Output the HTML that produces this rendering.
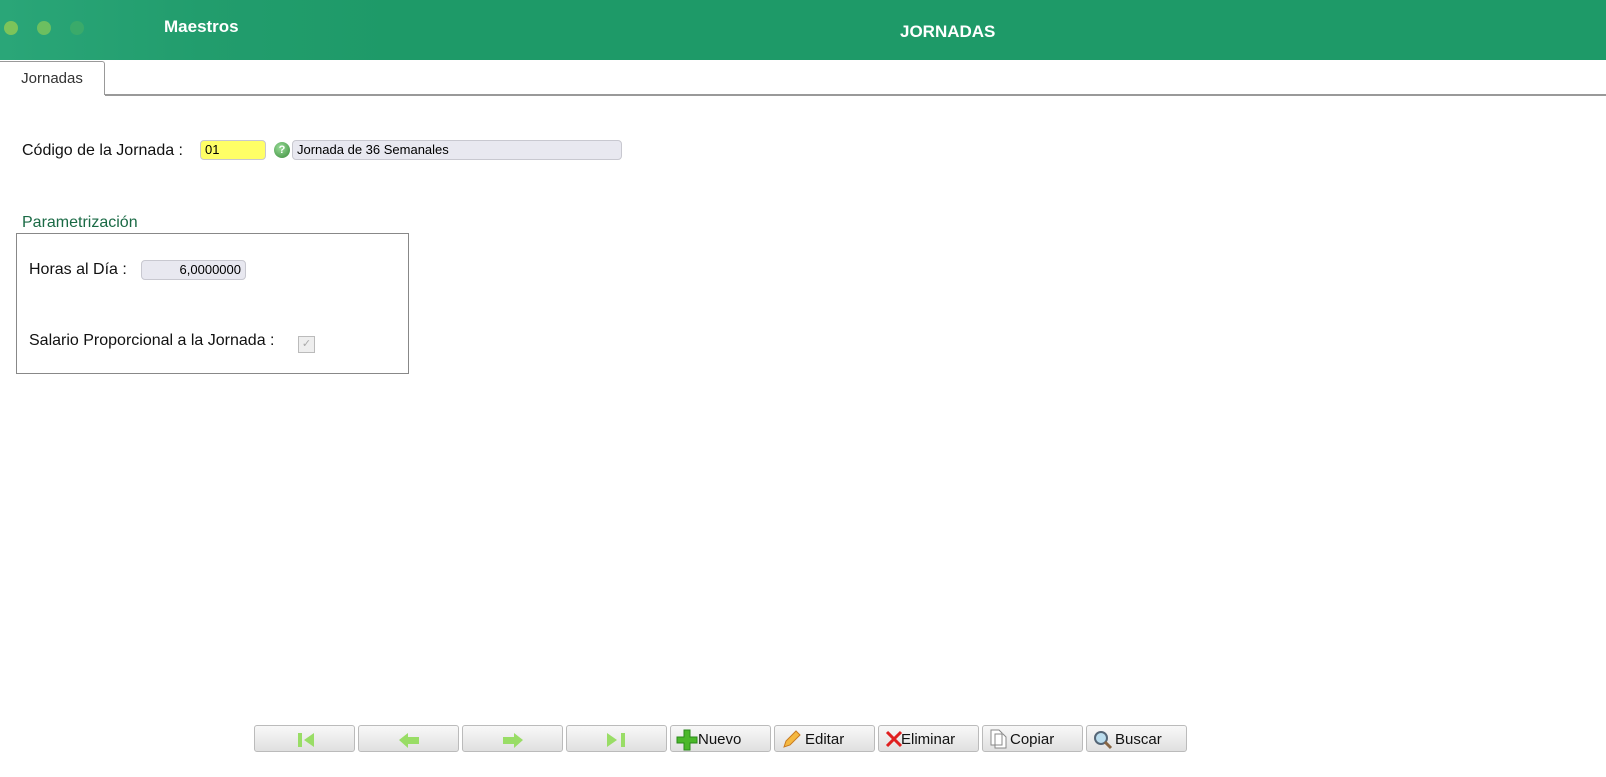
<!DOCTYPE html>
<html><head><meta charset="utf-8"><style>
body{margin:0;width:1606px;height:777px;background:#fff;font-family:"Liberation Sans",sans-serif;position:relative;overflow:hidden}
.hdr{position:absolute;left:0;top:0;width:1606px;height:60px;background:linear-gradient(90deg,#2aa678 0,#229d6d 200px,#1e9a68 400px)}
.dot{position:absolute;top:21px;width:14px;height:14px;border-radius:50%}
.a{position:absolute;white-space:nowrap}
.tab{position:absolute;left:0;top:61px;width:105px;height:34px;border:1px solid #999;border-bottom:none;border-left:none;border-radius:0 3px 0 0;background:#fff;font-size:15px;color:#333;text-align:center;line-height:34px;box-sizing:border-box}
.line{position:absolute;left:105px;top:94px;width:1501px;height:2px;background:#999}
.inp{position:absolute;border:1px solid #c8c8d0;border-radius:4px;background:#e8e8f0;font-size:13px;box-sizing:border-box;line-height:18px;padding:0 4px}
.btn{position:absolute;top:725px;width:101px;height:27px;border:1px solid #bbb;border-radius:3px;background:linear-gradient(#f8f8f8,#e0e0e0);box-sizing:border-box;font-size:15px;line-height:27px;color:#111}
</style></head><body>
<div class="hdr">
<div class="dot" style="left:4px;background:#7cc45a"></div>
<div class="dot" style="left:37px;background:#6cbf60"></div>
<div class="dot" style="left:70px;background:#3aaa6a"></div>
<div class="a" style="left:164px;top:17px;color:#fff;font-weight:bold;font-size:17px">Maestros</div>
<div class="a" style="left:900px;top:22px;color:#fff;font-weight:bold;font-size:17px">JORNADAS</div>
</div>
<div class="tab">Jornadas</div><div class="line"></div>
<div class="a" style="left:22px;top:142px;font-size:16px;color:#111">Código de la Jornada :</div>
<div class="inp" style="left:200px;top:140px;width:66px;height:20px;background:#ffff66">01</div>
<div class="a" style="left:274px;top:142px;width:16px;height:16px;border-radius:50%;background:radial-gradient(circle at 40% 35%,#9d9,#3a8a3a);color:#fff;font-size:11px;font-weight:bold;text-align:center;line-height:16px">?</div>
<div class="inp" style="left:292px;top:140px;width:330px;height:20px">Jornada de 36 Semanales</div>
<div class="a" style="left:22px;top:214px;font-size:16px;color:#1a6a45">Parametrización</div>
<div class="a" style="left:16px;top:233px;width:393px;height:141px;border:1px solid #888;box-sizing:border-box"></div>
<div class="a" style="left:29px;top:261px;font-size:16px;color:#111">Horas al Día :</div>
<div class="inp" style="left:141px;top:260px;width:105px;height:20px;text-align:right">6,0000000</div>
<div class="a" style="left:29px;top:332px;font-size:16px;color:#111">Salario Proporcional a la Jornada :</div>
<div class="a" style="left:298px;top:336px;width:15px;height:15px;border:1px solid #bbb;background:#eee;color:#aaa;font-size:11px;text-align:center;line-height:15px">✓</div>
<div class="btn" style="left:254px"><svg width="101" height="27"><rect x="43" y="7" width="4" height="14" fill="#9d6"/><path d="M59 7v14l-10-7z" fill="#9d6"/></svg></div>
<div class="btn" style="left:358px"><svg width="101" height="27"><path d="M40 14l9-7v4h11v7h-11v4z" fill="#9d6"/></svg></div>
<div class="btn" style="left:462px"><svg width="101" height="27"><path d="M60 14l-9-7v4h-11v7h11v4z" fill="#9d6"/></svg></div>
<div class="btn" style="left:566px"><svg width="101" height="27"><rect x="54" y="7" width="4" height="14" fill="#9d6"/><path d="M40 7v14l10-7z" fill="#9d6"/></svg></div>
<div class="btn" style="left:670px"><svg class="a" style="left:5px;top:3px" width="22" height="22"><path d="M8 1h6v7h7v6h-7v7h-6v-7h-7v-6h7z" fill="#4bb82a" stroke="#2a8a1a"/></svg><span class="a" style="left:27px">Nuevo</span></div>
<div class="btn" style="left:774px"><svg class="a" style="left:6px;top:3px" width="20" height="20"><path d="M3 18l2-6 10-10 4 4-10 10z" fill="#f5b840" stroke="#c87a20"/></svg><span class="a" style="left:30px">Editar</span></div>
<div class="btn" style="left:878px"><svg class="a" style="left:6px;top:4px" width="18" height="18"><path d="M2 2l14 14M16 2l-14 14" stroke="#e02020" stroke-width="3"/></svg><span class="a" style="left:22px">Eliminar</span></div>
<div class="btn" style="left:982px"><svg class="a" style="left:6px;top:3px" width="20" height="20"><path d="M2 1h8l3 3v12h-11z M6 5h8l3 3v11h-11z" fill="#fff" stroke="#888"/></svg><span class="a" style="left:27px">Copiar</span></div>
<div class="btn" style="left:1086px"><svg class="a" style="left:5px;top:3px" width="22" height="22"><circle cx="9" cy="9" r="6" fill="#bde" stroke="#567" stroke-width="2"/><path d="M13 13l6 6" stroke="#864" stroke-width="3"/></svg><span class="a" style="left:28px">Buscar</span></div>
</body></html>
